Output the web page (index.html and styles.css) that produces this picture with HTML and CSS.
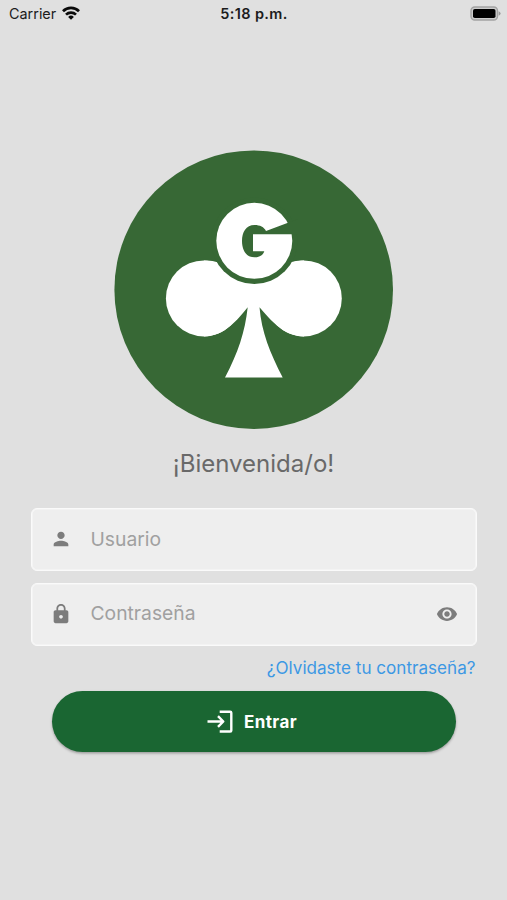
FILE: index.html
```html
<!DOCTYPE html>
<html lang="es">
<head>
<meta charset="utf-8">
<title>Entrar</title>
<link rel="stylesheet" href="styles.css">
</head>
<body>
<header class="status">
  <div class="carrier"><span>Carrier</span>
    <svg class="wifi" width="18" height="14" viewBox="0 0 18 14" fill="none" stroke="#0a0a0a" stroke-width="2.7"><path d="M1 5.2a11.4 11.4 0 0 1 16 0M4 8.6a7.2 7.2 0 0 1 10 0"/><path d="M9 13.8 6.100 10.900a4.200 4.200 0 0 1 5.800 0z" fill="#0a0a0a" stroke="none"/></svg>
  </div>
  <span class="time">5:18 p.m.</span>
  <svg class="battery" width="31" height="15" viewBox="0 0 31 15"><rect x="1" y="1" width="26.5" height="13" rx="3.8" fill="#ccc" stroke="#a2a2a2" stroke-width="1.4"/><rect x="3" y="3" width="22.5" height="9" rx="1.8" fill="#000"/><path d="M28.6 5.2q2 .8 2 2.300t-2 2.300z" fill="#999"/></svg>
</header>
<main class="login">
  <svg class="logo" width="280" height="280" viewBox="114 150 280 280">
    <circle cx="253.7" cy="289.7" r="139.3" fill="#376835"/>
    <g fill="#fff">
      <circle cx="203.9" cy="298.4" r="38"/>
      <circle cx="303.8" cy="298.4" r="38"/>
      <path d="M204 260.4C213 260.400 217 262 222 264H286C291 262 296 260.400 304 260.400V336.400C283 336.400 271 320 259.500 307.300C261.500 332 270 353 282.700 377.500H225C238 353 245 332 247.700 307.300C237 320 225 336.400 204 336.400Z"/>
    </g>
    <circle cx="254.3" cy="240.8" r="43.2" fill="#376835"/>
    <circle cx="254.3" cy="240.8" r="38" fill="#fff"/>
    <path fill="#376835" d="M266 231L288 222.700L298 219V234.300H253V251.300H264.300C263 256 258.500 257.300 254.500 257.300C246 257.300 242 250 242 241C242 232 246 225 254.500 225C260 225 264 227 266 231Z"/>
  </svg>
  <h1 class="welcome">¡Bienvenida/o!</h1>
  <form class="form">
    <div class="field">
      <svg width="22" height="22" viewBox="0 0 24 24"><path d="M12 12c2.210 0 4-1.790 4-4s-1.790-4-4-4-4 1.790-4 4 1.790 4 4 4zm0 2c-2.670 0-8 1.340-8 4v2h16v-2c0-2.660-5.330-4-8-4z"/></svg>
      <span class="label">Usuario</span>
    </div>
    <div class="field">
      <svg width="22" height="22" viewBox="0 0 24 24"><path d="M18 8h-1V6c0-2.760-2.240-5-5-5S7 3.240 7 6v2H6c-1.100 0-2 .9-2 2v10c0 1.100.9 2 2 2h12c1.100 0 2-.9 2-2V10c0-1.100-.9-2-2-2zm-6 9c-1.100 0-2-.9-2-2s.9-2 2-2 2 .9 2 2-.9 2-2 2zm3.100-9H8.900V6c0-1.710 1.390-3.100 3.100-3.100s3.100 1.390 3.100 3.100v2z"/></svg>
      <span class="label">Contraseña</span>
      <svg width="22" height="22" viewBox="0 0 24 24"><path d="M12 4.500C7 4.500 2.730 7.610 1 12c1.730 4.390 6 7.500 11 7.500s9.270-3.110 11-7.500c-1.730-4.390-6-7.500-11-7.500zM12 17c-2.760 0-5-2.240-5-5s2.240-5 5-5 5 2.240 5 5-2.240 5-5 5zm0-8c-1.660 0-3 1.340-3 3s1.340 3 3 3 3-1.340 3-3-1.340-3-3-3z"/></svg>
    </div>
    <a class="forgot">¿Olvidaste tu contraseña?</a>
    <button class="enter" type="button">
      <svg width="26" height="24" viewBox="0 0 26 24" fill="none" stroke="#fff" stroke-width="2.4" stroke-linejoin="round"><path d="M.5 11.500H16M11 6.200 16.300 11.500 11 16.800M12.700 1.700H23.200Q24.300 1.700 24.300 2.800V20.400Q24.300 21.500 23.200 21.500H12.700"/></svg>
      <span>Entrar</span>
    </button>
  </form>
</main>
</body>
</html>
```
FILE: styles.css
```css
body {
  margin: 0;
  height: 900px;
  overflow: hidden;
  background: #e0e0e0;
  font-family: Inter, "Liberation Sans", sans-serif;
}
.status {
  display: grid;
  grid-template-columns: 1fr auto 1fr;
  align-items: center;
  height: 27px;
  padding: 0 6px 0 9px;
  color: #1c1c1c;
}
.carrier {
  display: flex;
  align-items: center;
  gap: 6px;
  font-size: 14.4px;
}
.wifi { margin-top: -2px; }
.time {
  margin-right: 2px;
  font-size: 14.5px;
  font-weight: 600;
  letter-spacing: .35px;
}
.battery { justify-self: end; }
.login {
  display: flex;
  flex-direction: column;
  align-items: center;
  padding-top: 123px;
}
.logo { display: block; }
.welcome {
  margin: 18px 0 0;
  font-size: 24px;
  line-height: 32px;
  font-weight: 400;
  color: #696969;
}
.form {
  display: flex;
  flex-direction: column;
  width: 446px;
  margin-top: 28px;
}
.field {
  display: flex;
  align-items: center;
  box-sizing: border-box;
  height: 63px;
  margin-bottom: 12px;
  padding: 0 18px;
  border: 1px solid #fafafa;
  border-radius: 6px;
  background: #eee;
  box-shadow: inset 0 0 0 .6px #f8f8f8;
}
.field svg {
  margin-top: -1px;
  fill: #7c7c7c;
}
.label {
  flex: 1;
  margin: -2px 0 0 19px;
  font-size: 19.3px;
  line-height: 24px;
  color: #a0a0a0;
}
.field:nth-child(2) .label { margin-top: -3px; }
.forgot {
  align-self: flex-end;
  margin: -1px 1px 0 0;
  font-size: 17.1px;
  line-height: 22px;
  color: #3c98e4;
}
.enter {
  display: flex;
  align-items: center;
  justify-content: center;
  gap: 11px;
  height: 61px;
  margin: 12px 21px 0;
  padding: 0 3px 0 0;
  border: 0;
  border-radius: 31px;
  background: #1a6632;
  box-shadow: 0 1.5px 2.5px rgba(0, 0, 0, .3);
  color: #fff;
  font: 700 17px Inter, sans-serif;
  letter-spacing: .4px;
}
```
